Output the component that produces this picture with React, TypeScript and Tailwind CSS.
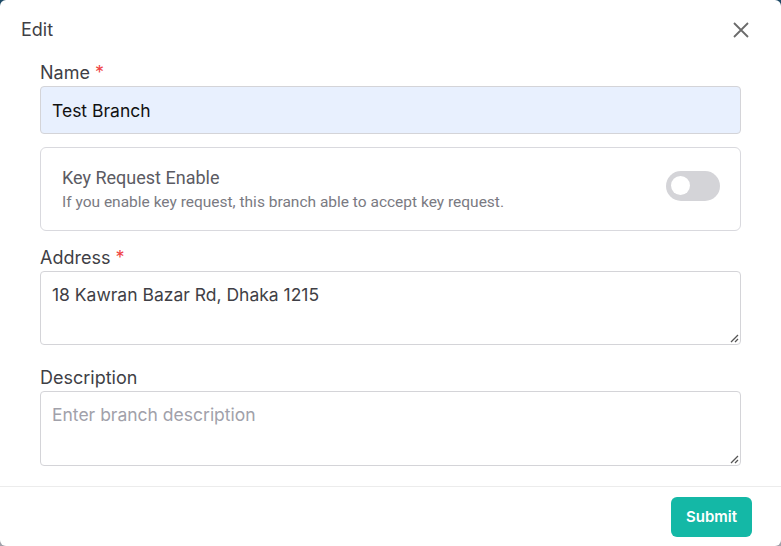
import React from 'react';

const Label: React.FC<{ text: string; required?: boolean }> = ({ text, required }) => (
  <label className="block text-[18px] leading-[22px] text-[#3f3f46] mb-[2px]">
    {text}
    {required && <span className="text-[#ef4444] ml-[5px]">*</span>}
  </label>
);

const ResizeGrip: React.FC = () => (
  <svg className="absolute right-[2px] bottom-[2px]" width="10" height="10" viewBox="0 0 10 10">
    <path d="M9 2 L2 9 M9 6 L6 9" stroke="#555" strokeWidth="1.3" />
  </svg>
);

export default function App() {
  return (
    <div className="w-[781px] h-[546px] bg-gradient-to-b from-[#1d4a66] to-[#a1a1aa] font-['Inter',sans-serif]">
      <div className="w-full h-full bg-white rounded-[6px] flex flex-col">
        <div className="flex items-center justify-between pl-[21px] pr-[31px] pt-[14px] h-[55px]">
          <h2 className="text-[18px] leading-[24px] text-[#3f3f46] -mt-[9px]">Edit</h2>
          <button className="text-[#6b6b6b] -mt-[9px]">
            <svg width="18" height="18" viewBox="0 0 18 18">
              <path d="M2 2 L16 16 M16 2 L2 16" stroke="currentColor" strokeWidth="1.8" />
            </svg>
          </button>
        </div>

        <div className="flex-1 px-[40px] pt-[7px]">
          <Label text="Name" required />
          <input
            className="w-full h-[48px] bg-[#e8f0fe] border border-[#d4d4d8] rounded-[4px] px-[11px] text-[17.5px] text-[#111] outline-none"
            defaultValue="Test Branch"
          />

          <div className="mt-[13px] h-[84px] border border-[#d9d9de] rounded-[6px] flex items-center justify-between pl-[21px] pr-[20px] font-['Roboto',sans-serif]">
            <div>
              <div className="text-[18px] leading-[22px] text-[#5b5b63]">Key Request Enable</div>
              <div className="text-[15.5px] leading-[20px] text-[#7a7a82] mt-[3px]">
                If you enable key request, this branch able to accept key request.
              </div>
            </div>
            <div className="-mt-[7px] w-[54px] h-[30px] rounded-full bg-[#d4d4d8] flex items-center pl-[5px]">
              <div className="w-[19px] h-[19px] rounded-full bg-white" />
            </div>
          </div>

          <div className="mt-[16px]">
            <Label text="Address" required />
            <div className="relative">
              <div className="h-[74px] border border-[#d4d4d8] rounded-[4px] px-[11px] pt-[12px] text-[17.5px] leading-[22px] text-[#3f3f46]">
                18 Kawran Bazar Rd, Dhaka 1215
              </div>
              <ResizeGrip />
            </div>
          </div>

          <div className="mt-[22px]">
            <Label text="Description" />
            <div className="relative">
              <div className="h-[75px] border border-[#d4d4d8] rounded-[4px] px-[11px] pt-[12px] text-[17.5px] leading-[22px] text-[#a1a1aa]">
                Enter branch description
              </div>
              <ResizeGrip />
            </div>
          </div>
        </div>

        <div className="border-t border-[#ececec] h-[60px] flex items-start justify-end pr-[29px] pt-[10px]">
          <button className="h-[40px] w-[81px] rounded-[6px] bg-[#14b8a6] text-white text-[15px] font-semibold">
            Submit
          </button>
        </div>
      </div>
    </div>
  );
}
